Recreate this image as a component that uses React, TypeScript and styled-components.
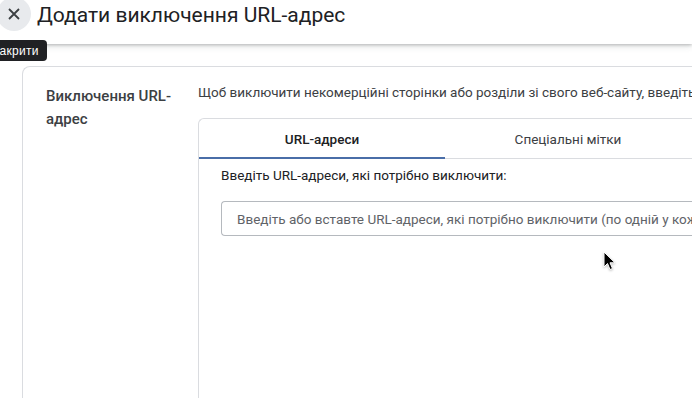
import React from "react";
import styled, { createGlobalStyle } from "styled-components";

const GlobalStyle = createGlobalStyle`
  html, body {
    margin: 0;
    padding: 0;
    background: #fff;
    overflow: hidden;
  }
  body {
    font-family: Roboto, "Noto Sans", Arial, sans-serif;
    color: #202124;
  }
`;

const Page = styled.div`
  position: relative;
  width: 692px;
  height: 398px;
  overflow: hidden;
  background: #fff;
`;

const Header = styled.header`
  position: relative;
  z-index: 2;
  height: 44px;
  display: flex;
  align-items: flex-start;
  gap: 6px;
  background: #fff;
  box-shadow: 0 1px 3px rgba(60, 64, 67, 0.3), 0 3px 6px rgba(60, 64, 67, 0.12);
`;

const CloseButton = styled.button`
  position: relative;
  flex: none;
  width: 34px;
  height: 34px;
  margin: -3px 0 0 -3px;
  border: none;
  border-radius: 50%;
  background: #e8eaed;
  display: flex;
  align-items: center;
  justify-content: center;
  padding: 0;
  cursor: pointer;
`;

const Tooltip = styled.div`
  position: absolute;
  top: 43px;
  left: -13px;
  height: 21px;
  padding: 0 8px;
  display: flex;
  align-items: center;
  background: #202124;
  color: #fff;
  border-radius: 4px;
  font-size: 12px;
  letter-spacing: 0.3px;
  white-space: nowrap;
`;

const Title = styled.h1`
  margin: 0;
  padding-top: 3px;
  font-size: 21px;
  font-weight: 400;
  color: #202124;
  white-space: nowrap;
`;

const Main = styled.main`
  padding: 22px 0 0 22px;
`;

const Card = styled.section`
  display: flex;
  height: 400px;
  width: 760px;
  border: 1px solid #dadce0;
  border-right: none;
  border-radius: 8px 0 0 0;
`;

const Label = styled.div`
  width: 128px;
  flex: none;
  padding: 18px 0 0 23px;
  margin-right: 24px;
  font-size: 15px;
  font-weight: 500;
  line-height: 23px;
  color: #3c4043;
`;

const Content = styled.div`
  flex: 1;
  padding-top: 17px;
  display: flex;
  flex-direction: column;
`;

const Description = styled.p`
  margin: 0 0 18px 0;
  font-size: 13.5px;
  line-height: 16px;
  color: #3c4043;
  white-space: nowrap;
`;

const TabBox = styled.div`
  flex: 1;
  border: 1px solid #dadce0;
  border-right: none;
  border-radius: 6px 0 0 0;
`;

const TabRow = styled.div`
  display: flex;
  height: 39px;
  border-bottom: 1px solid #dadce0;
`;

const Tab = styled.div<{ $active?: boolean }>`
  width: 246px;
  display: flex;
  align-items: center;
  justify-content: center;
  font-size: 13.5px;
  font-weight: ${(p) => (p.$active ? 500 : 400)};
  color: ${(p) => (p.$active ? "#202124" : "#3c4043")};
  box-shadow: ${(p) => (p.$active ? "inset 0 -2px 0 #4a6ea8" : "none")};
  margin-bottom: -1px;
`;

const TabPanel = styled.div`
  padding: 8px 0 0 22px;
`;

const FieldLabel = styled.div`
  font-size: 13.5px;
  line-height: 16px;
  color: #202124;
  margin-bottom: 18px;
`;

const UrlInput = styled.div`
  width: 520px;
  height: 33px;
  border: 1px solid #b5b9be;
  border-right: none;
  border-radius: 4px 0 0 4px;
  display: flex;
  align-items: center;
  padding-left: 15px;
  font-size: 13.5px;
  color: #5f6368;
  white-space: nowrap;
  overflow: hidden;
`;

const Pointer = styled.svg`
  position: absolute;
  left: 603px;
  top: 251px;
  z-index: 3;
  filter: drop-shadow(0 1px 1px rgba(0, 0, 0, 0.25));
`;

export default function App() {
  return (
    <Page>
      <GlobalStyle />
      <Header>
        <CloseButton aria-label="Закрити">
          <svg width="12" height="12" viewBox="0 0 12 12">
            <path d="M1 1 L11 11 M11 1 L1 11" stroke="#3c4043" strokeWidth="1.8" />
          </svg>
          <Tooltip>Закрити</Tooltip>
        </CloseButton>
        <Title>Додати виключення URL-адрес</Title>
      </Header>
      <Main>
        <Card>
          <Label>Виключення URL-адрес</Label>
          <Content>
            <Description>
              Щоб виключити некомерційні сторінки або розділи зі свого веб-сайту, введіть їх URL-адреси
            </Description>
            <TabBox>
              <TabRow>
                <Tab $active>URL-адреси</Tab>
                <Tab>Спеціальні мітки</Tab>
              </TabRow>
              <TabPanel>
                <FieldLabel>Введіть URL-адреси, які потрібно виключити:</FieldLabel>
                <UrlInput>
                  Введіть або вставте URL-адреси, які потрібно виключити (по одній у кожному рядку)
                </UrlInput>
              </TabPanel>
            </TabBox>
          </Content>
        </Card>
      </Main>
      <Pointer width="14" height="20" viewBox="0 0 14 20">
        <path d="M1 1 L1 16 L4.5 12.5 L7 18.5 L9.5 17.5 L7 11.8 L12 11.8 Z" fill="#000" stroke="#fff" strokeWidth="1" />
      </Pointer>
    </Page>
  );
}
